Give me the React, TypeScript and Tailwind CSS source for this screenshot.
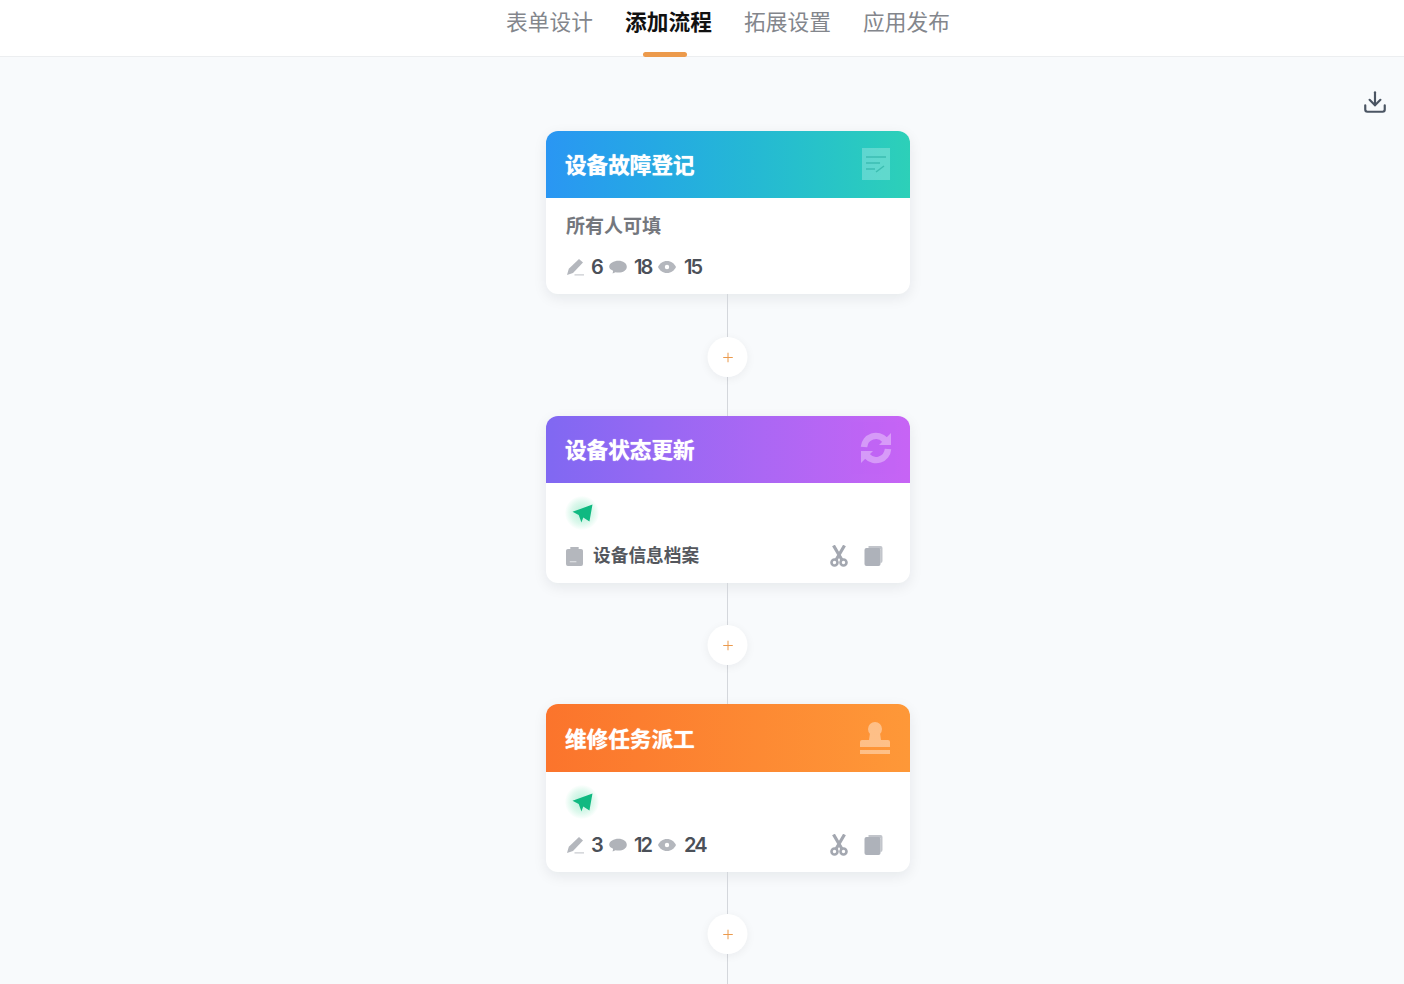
import { Download, Plus } from 'lucide-react'
import type { ReactNode } from 'react'

const tabs = [
  { label: '表单设计' },
  { label: '添加流程', active: true },
  { label: '拓展设置' },
  { label: '应用发布' },
]

function PenIcon() {
  return (
    <svg viewBox="0 0 18 18" className="w-[18px] h-[18px] text-[#b4b7bd]" fill="currentColor">
      <path d="M13 1 17 4.600 7 15 1 17 2.800 10.800z" />
      <path d="M8.500 16.300H18v1.200H8.500z" opacity=".7" />
    </svg>
  )
}

function ChatIcon() {
  return (
    <svg viewBox="0 0 18 18" className="w-[18px] h-[18px] text-[#b0b3b9]" fill="currentColor">
      <path d="M9.500 2.800c4.500 0 8.300 2.500 8.300 6s-3.600 5.800-8.300 5.800c-1.100 0-2-.1-3-.4l-2.900 1.300.5-2.700C1.400 11.700.2 10.300.2 8.800c0-3.500 4.700-6 9.300-6z" />
    </svg>
  )
}

function EyeIcon() {
  return (
    <svg viewBox="0 0 18 18" className="w-[18px] h-[18px] text-[#b4b7bd]" fill="currentColor">
      <path fillRule="evenodd" d="M9 3c4.200 0 7.500 2.600 9 6-1.500 3.400-4.800 6-9 6S1.500 12.400 0 9c1.500-3.400 4.800-6 9-6zM9 6.800a2.200 2.200 0 1 0 0 4.400 2.200 2.200 0 0 0 0-4.400z" />
    </svg>
  )
}

function Stats({ a, b, c }: { a: number; b: number; c: number }) {
  return (
    <div className="flex items-center text-[20px] font-semibold leading-none tracking-[-2px] text-[#4b5058]">
      <PenIcon />
      <span className="ml-[7px] w-[18px]">{a}</span>
      <ChatIcon />
      <span className="ml-[7px] w-[24px]">{b}</span>
      <EyeIcon />
      <span className="ml-[8px]">{c}</span>
    </div>
  )
}

function SendBadge() {
  return (
    <div className="w-[34px] h-[34px] -ml-[1px] rounded-full bg-[radial-gradient(circle,#b5f0d8_0%,#dcf8ec_45%,#ffffff_72%)] flex items-center justify-center">
      <svg viewBox="0 0 20 20" className="w-[21px] h-[21px]" fill="#10b981">
        <path d="M19.500 1.500 16.600 17.500 10.700 13.800 9 18.500 6.400 11.400 0.500 8.400z" />
      </svg>
    </div>
  )
}

function CardActions() {
  return (
    <div className="flex items-center gap-[16px] pr-[9px]">
      <svg viewBox="0 0 18 22" className="w-[18px] h-[22px]" fill="none" stroke="#a3a7b0">
        <path d="M3.500 0.500 12 15M14.500 0.500 6 15" strokeWidth="3.200" />
        <circle cx="4.500" cy="17.500" r="3" strokeWidth="2.600" />
        <circle cx="13.500" cy="17.500" r="3" strokeWidth="2.600" />
      </svg>
      <svg viewBox="0 0 18 20" className="w-[19px] h-[20px]" fill="#aeb2ba">
        <path d="M4 0h12a2 2 0 0 1 2 2v13a2 2 0 0 1-2 2V3H4z" opacity=".75" />
        <rect x="0" y="2" width="16" height="18" rx="2" />
      </svg>
    </div>
  )
}

function Connector({ height, plusTop }: { height: string; plusTop: string }) {
  return (
    <div className={`relative w-[2px] ${height}`}>
      <div className="w-px h-full bg-[#d4d7dc]" />
      <div className={`absolute left-0 -translate-x-[19.500px] w-[40px] h-[40px] rounded-full bg-white shadow-[0_2px_10px_rgba(15,23,42,0.06)] flex items-center justify-center ${plusTop}`}>
        <Plus size={15} strokeWidth={1.6} className="text-[#eb9a4d]" />
      </div>
    </div>
  )
}

function CardHeader({ title, gradient, height, icon }: { title: string; gradient: string; height: string; icon: ReactNode }) {
  return (
    <div className={`pl-[19px] pr-[20px] flex items-center justify-between ${height} ${gradient}`}>
      <span className="text-[21.600px] font-bold text-white leading-none mt-[2px] [text-shadow:0_0_1px_#ffffff]">{title}</span>
      {icon}
    </div>
  )
}

export default function App() {
  return (
    <div className="relative h-[984px] overflow-hidden bg-[#f8fafc] font-['Inter','Noto_Sans_CJK_SC',sans-serif]">
      <div className="h-[57px] pl-[52px] bg-white border-b border-[#eceef0] flex justify-center gap-[32px]">
        {tabs.map(t => (
          <div key={t.label} className="relative w-[87px] pt-[6px] text-center">
            <span className={`text-[21.700px] leading-[32px] whitespace-nowrap ${t.active ? 'font-bold text-[#111111]' : 'text-[#83868c]'}`}>
              {t.label}
            </span>
            {t.active && <div className="absolute left-[18px] -bottom-px w-[44px] h-[5px] rounded-full bg-[#ec9a4c]" />}
          </div>
        ))}
      </div>

      <Download size={26} strokeWidth={2} className="absolute right-[16px] top-[89px] text-[#4b5563]" />

      <div className="flex flex-col items-center pt-[74px] pl-[52px]">
        <div className="w-[364px] h-[163px] rounded-[12px] bg-white overflow-hidden shadow-[0_4px_14px_rgba(15,23,42,0.08)]">
          <CardHeader
            title="设备故障登记"
            height="h-[67px]"
            gradient="bg-gradient-to-r from-[#2a96f3] to-[#2dd0b8]"
            icon={
              <svg viewBox="0 0 28 32" className="w-[28px] h-[32px] -mt-[2px]">
                <rect width="28" height="32" fill="#ffffff" opacity=".25" />
                <path d="M4 9h20M4 15h14M4 21h9M14 24l8-6" stroke="#1fa79a" strokeWidth="1.500" fill="none" opacity=".55" />
              </svg>
            }
          />
          <div className="pl-[20px] pr-[18px] pt-[15px]">
            <div className="text-[19px] font-bold leading-[28px] text-[#74777d]">所有人可填</div>
            <div className="mt-[16px]">
              <Stats a={6} b={18} c={15} />
            </div>
          </div>
        </div>

        <Connector height="h-[122px]" plusTop="top-[43px]" />

        <div className="w-[364px] h-[167px] rounded-[12px] bg-white overflow-hidden shadow-[0_4px_14px_rgba(15,23,42,0.08)]">
          <CardHeader
            title="设备状态更新"
            height="h-[67px]"
            gradient="bg-gradient-to-r from-[#8068f2] to-[#c764f5]"
            icon={
              <svg viewBox="0 0 32 32" className="w-[32px] h-[32px] opacity-35 -mr-[2px] -mt-[4px]" fill="none" stroke="#ffffff" strokeWidth="6.500">
                <path d="M4 15A12 12 0 0 1 25 8" />
                <path d="M28 17A12 12 0 0 1 7 24" />
                <path d="M31 1v12H19z" fill="#ffffff" stroke="none" />
                <path d="M1 31V19h12z" fill="#ffffff" stroke="none" />
              </svg>
            }
          />
          <div className="pl-[20px] pr-[18px] pt-[13px]">
            <SendBadge />
            <div className="mt-[13px] flex items-center justify-between">
              <div className="flex items-center">
                <svg viewBox="0 0 18 20" className="w-[17px] h-[19px]" fill="#b4b7bd">
                  <path d="M6 0h6a1 1 0 0 1 1 2h3a2 2 0 0 1 2 2v14a2 2 0 0 1-2 2H2a2 2 0 0 1-2-2V4a2 2 0 0 1 2-2h3a1 1 0 0 1 1-2z" />
                  <path d="M4 15h7v1.200H4z" fill="#e5e7eb" />
                </svg>
                <span className="ml-[10px] text-[17.700px] font-bold leading-[26px] text-[#54575d]">设备信息档案</span>
              </div>
              <CardActions />
            </div>
          </div>
        </div>

        <Connector height="h-[121px]" plusTop="top-[42px]" />

        <div className="w-[364px] h-[168px] rounded-[12px] bg-white overflow-hidden shadow-[0_4px_14px_rgba(15,23,42,0.08)]">
          <CardHeader
            title="维修任务派工"
            height="h-[68px] pt-[2px]"
            gradient="bg-gradient-to-r from-[#fb742c] to-[#fe9838]"
            icon={
              <svg viewBox="0 0 30 32" className="w-[30px] h-[32px] opacity-40 -mt-[2px]" fill="#ffffff">
                <circle cx="15" cy="7" r="7" />
                <path d="M10 11h10l1 7h7a2 2 0 0 1 2 2v5H0v-5a2 2 0 0 1 2-2h7z" />
                <path d="M0 28h30v4H0z" />
              </svg>
            }
          />
          <div className="pl-[20px] pr-[18px] pt-[13px]">
            <SendBadge />
            <div className="mt-[15px] flex items-center justify-between">
              <Stats a={3} b={12} c={24} />
              <CardActions />
            </div>
          </div>
        </div>

        <Connector height="h-[124px]" plusTop="top-[42px]" />
      </div>
    </div>
  )
}
